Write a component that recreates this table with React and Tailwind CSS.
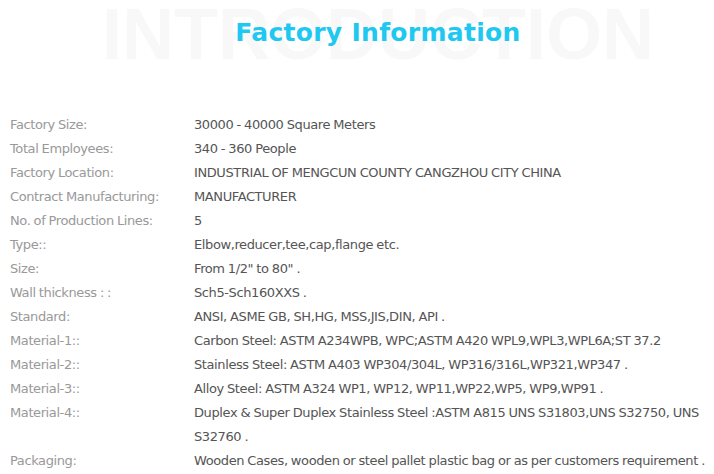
import React from "react";

const rows = [
  ["Factory Size:", "30000 - 40000 Square Meters"],
  ["Total Employees:", "340 - 360 People"],
  ["Factory Location:", "INDUSTRIAL OF MENGCUN COUNTY CANGZHOU CITY CHINA"],
  ["Contract Manufacturing:", "MANUFACTURER"],
  ["No. of Production Lines:", "5"],
  ["Type::", "Elbow,reducer,tee,cap,flange etc."],
  ["Size:", 'From 1/2" to 80" .'],
  ["Wall thickness : :", "Sch5-Sch160XXS ."],
  ["Standard:", "ANSI, ASME GB, SH,HG, MSS,JIS,DIN, API ."],
  ["Material-1::", "Carbon Steel: ASTM A234WPB, WPC;ASTM A420 WPL9,WPL3,WPL6A;ST 37.2"],
  ["Material-2::", "Stainless Steel: ASTM A403 WP304/304L, WP316/316L,WP321,WP347 ."],
  ["Material-3::", "Alloy Steel: ASTM A324 WP1, WP12, WP11,WP22,WP5, WP9,WP91 ."],
  ["Material-4::", "Duplex & Super Duplex Stainless Steel :ASTM A815 UNS S31803,UNS S32750, UNS S32760 ."],
  ["Packaging:", "Wooden Cases, wooden or steel pallet plastic bag or as per customers requirement ."],
];

export default function App() {
  return (
    <div className="w-[714px] h-[474px] bg-white overflow-hidden font-['DejaVu_Sans',sans-serif]">
      <div className="relative h-[113px] pl-[42px]">
        <div className="absolute inset-x-0 top-[-11px] pl-[42px] text-center text-[72px] leading-[90px] font-bold text-[#f8f8f8] font-['Liberation_Sans',sans-serif] whitespace-nowrap">
          INTRODUCTION
        </div>
        <h2 className="relative pt-[16px] text-center text-[25px] leading-[34px] tracking-[0.3px] font-bold text-[#1ec8f0]">
          Factory Information
        </h2>
      </div>
      <div className="pl-[10px] text-[13px] leading-[24px] tracking-[-0.4px] [word-spacing:-0.5px]">
        {rows.map(([k, v]) => (
          <div key={k} className="flex">
            <div className="w-[184px] shrink-0 text-[#999999]">{k}</div>
            <div className="w-[516px] text-[#555555]">{v}</div>
          </div>
        ))}
      </div>
    </div>
  );
}
